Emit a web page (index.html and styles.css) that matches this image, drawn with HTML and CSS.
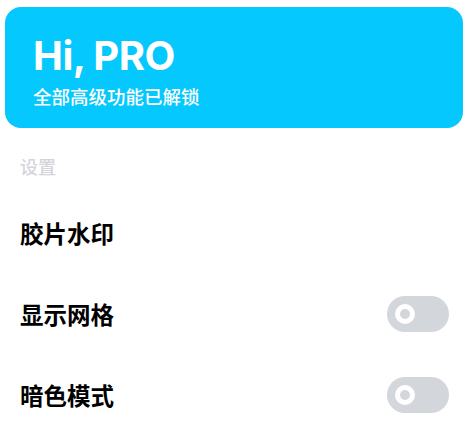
FILE: index.html
```html
<!DOCTYPE html>
<html lang="zh-CN">
<head>
<meta charset="utf-8">
<link rel="stylesheet" href="styles.css">
</head>
<body>
<div class="page">
  <section class="pro-card">
    <div class="pro-title">Hi, PRO</div>
    <div class="pro-sub">全部高级功能已解锁</div>
  </section>
  <section class="settings">
    <div class="section-label">设置</div>
    <div class="row"><span class="row-label">胶片水印</span></div>
    <div class="row"><span class="row-label">显示网格</span><span class="toggle"><span class="knob"></span></span></div>
    <div class="row"><span class="row-label">暗色模式</span><span class="toggle"><span class="knob"></span></span></div>
  </section>
</div>
</body>
</html>
```
FILE: styles.css
```css
html, body {
  margin: 0;
  padding: 0;
  background: #ffffff;
}
.page {
  width: 470px;
  font-family: "Noto Sans CJK SC", "Noto Sans", sans-serif;
}
.pro-card {
  margin: 7px 7px 0 5px;
  height: 121px;
  box-sizing: border-box;
  padding: 25px 28px 0 28px;
  background: #05c8fe;
  border-radius: 16px;
  color: #ffffff;
}
.pro-title {
  font-family: Inter, "Noto Sans", sans-serif;
  font-weight: 700;
  font-size: 40px;
  line-height: 48px;
  letter-spacing: -0.5px;
}
.pro-sub {
  margin-top: 4px;
  font-size: 18.5px;
  line-height: 24px;
  font-weight: 500;
}
.settings {
  padding: 0 21px 0 20px;
}
.section-label {
  margin-top: 26px;
  font-size: 18px;
  line-height: 24px;
  font-weight: 500;
  color: #d3d5da;
}
.row {
  height: 81px;
  display: flex;
  align-items: center;
  justify-content: space-between;
}
.section-label + .row {
  margin-top: 14px;
}
.row-label {
  font-size: 23.5px;
  font-weight: 700;
  color: #000000;
}
.toggle {
  width: 62px;
  height: 36px;
  border-radius: 18px;
  background: #d3d6da;
  display: flex;
  align-items: center;
  padding-left: 8px;
  box-sizing: border-box;
}
.knob {
  width: 20px;
  height: 20px;
  border-radius: 50%;
  box-sizing: border-box;
  border: 5.5px solid #ffffff;
  background: #d3d6da;
}
```
